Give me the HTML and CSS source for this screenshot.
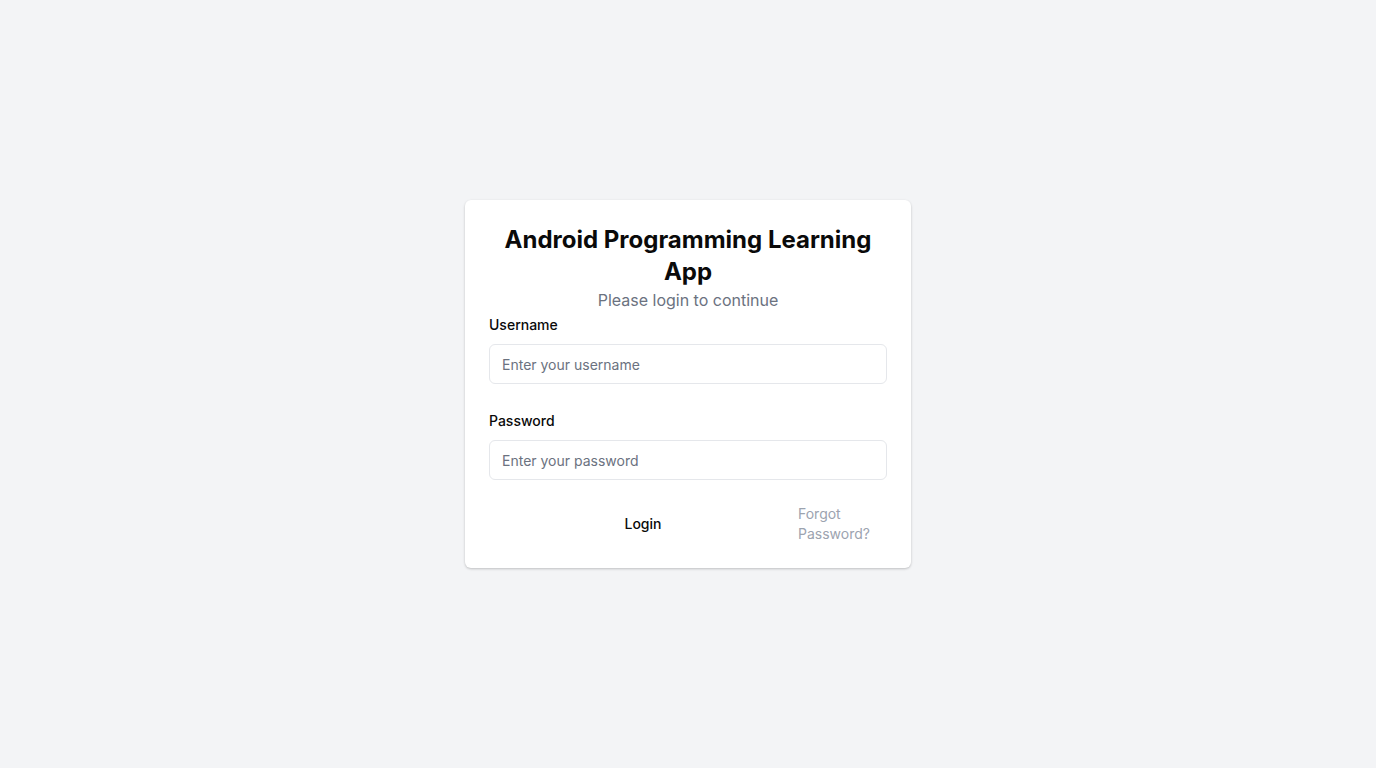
FILE: index.html
```html
<!DOCTYPE html>
<html lang="en">
<head>
<meta charset="utf-8">
<title>Login</title>
<link rel="stylesheet" href="styles.css">
</head>
<body>
<main class="page">
  <section class="card">
    <h1 class="title">Android Programming Learning App</h1>
    <p class="subtitle">Please login to continue</p>
    <form class="form">
      <div class="field">
        <label class="label" for="username">Username</label>
        <input class="input" id="username" type="text" placeholder="Enter your username">
      </div>
      <div class="field">
        <label class="label" for="password">Password</label>
        <input class="input" id="password" type="password" placeholder="Enter your password">
      </div>
      <div class="actions">
        <button class="login" type="button">Login</button>
        <a class="forgot" href="#">Forgot Password?</a>
      </div>
    </form>
  </section>
</main>
</body>
</html>
```
FILE: styles.css
```css
* { box-sizing: border-box; }
html, body { margin: 0; padding: 0; }
body {
  background: #f3f4f6;
  font-family: Inter, "Noto Sans", sans-serif;
  color: #111827;
}
.page {
  min-height: 768px;
  display: flex;
  align-items: center;
  justify-content: center;
}
.card {
  width: 446px;
  background: #ffffff;
  border-radius: 6px;
  box-shadow: 0 1px 3px rgba(0,0,0,0.15), 0 1px 2px rgba(0,0,0,0.08);
  padding: 24px;
}
.title {
  margin: 0;
  font-size: 24px;
  line-height: 32px;
  font-weight: 700;
  text-align: center;
  color: #0a0a0a;
}
.subtitle {
  margin: 0;
  font-size: 16px;
  line-height: 24px;
  text-align: center;
  color: #6b7280;
}
.form {
  display: flex;
  flex-direction: column;
  padding-top: 4px;
}
.field {
  display: flex;
  flex-direction: column;
  gap: 10px;
  margin-bottom: 28px;
}
.field + .field { margin-bottom: 24px; }
.label {
  font-size: 14px;
  line-height: 18px;
  font-weight: 500;
  color: #0a0a0a;
}
.input {
  height: 40px;
  border: 1px solid #e5e7eb;
  border-radius: 6px;
  padding: 0 12px;
  font-family: inherit;
  font-size: 14px;
  color: #111827;
  background: #fff;
  outline: none;
}
.input::placeholder { color: #6b7280; }
.actions {
  display: flex;
  align-items: center;
  height: 40px;
}
.login {
  flex: 1;
  height: 40px;
  padding: 0 0 2px;
  border: none;
  background: transparent;
  font-family: inherit;
  font-size: 14px;
  font-weight: 500;
  color: #0a0a0a;
  cursor: pointer;
}
.forgot {
  width: 90px;
  padding: 0 16px 0 1px;
  font-size: 14px;
  line-height: 20px;
  color: #9ca3af;
  text-decoration: none;
}
```
